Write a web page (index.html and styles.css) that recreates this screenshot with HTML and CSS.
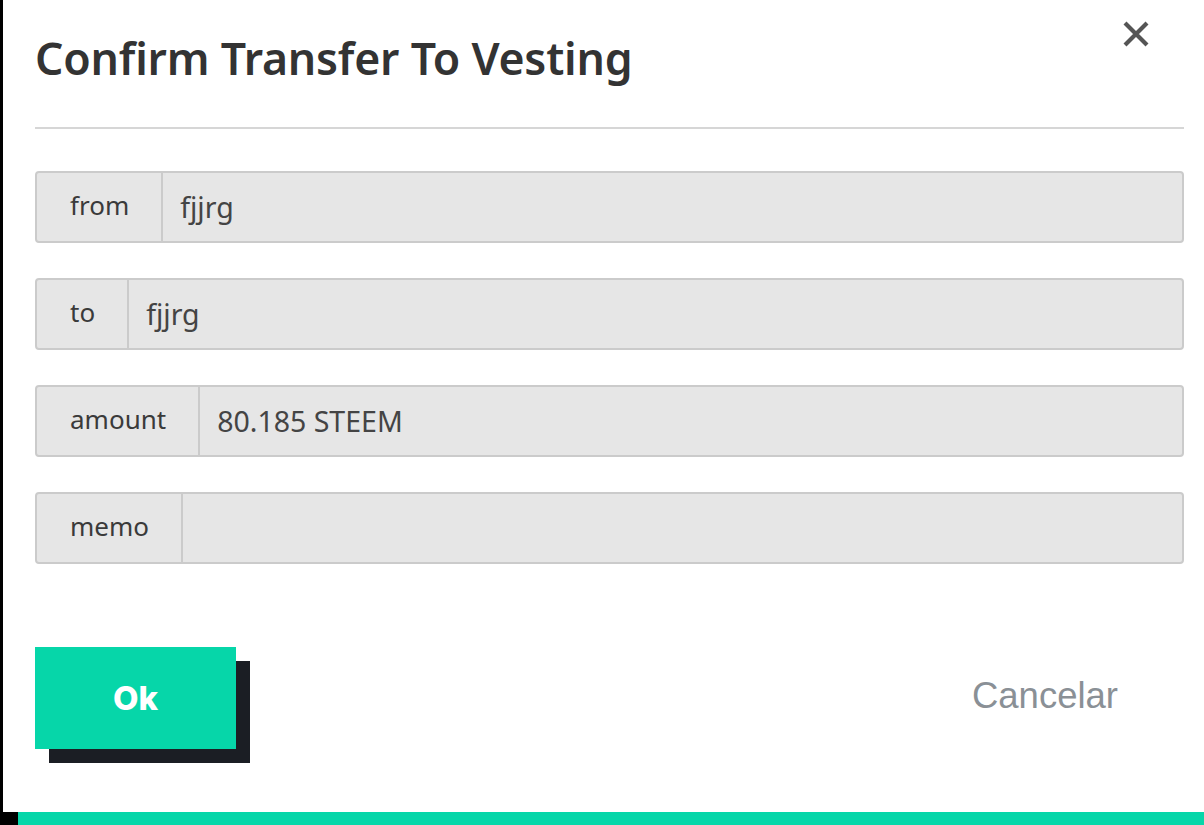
FILE: index.html
```html
<!DOCTYPE html>
<html lang="en">
<head>
<meta charset="utf-8">
<title>Confirm Transfer To Vesting</title>
<link rel="stylesheet" href="styles.css">
</head>
<body>
<div class="screen">
  <div class="modal">
    <button class="close" aria-label="Close">
      <svg width="28" height="28" viewBox="0 0 28 28"><path d="M3 3 L25 25 M25 3 L3 25" stroke="#555" stroke-width="4.2" stroke-linecap="butt"/></svg>
    </button>
    <h1 class="title">Confirm Transfer To Vesting</h1>
    <div class="rule"></div>
    <div class="fields">
      <div class="group"><span class="label">from</span><span class="value">fjjrg</span></div>
      <div class="group"><span class="label">to</span><span class="value">fjjrg</span></div>
      <div class="group"><span class="label">amount</span><span class="value">80.185 STEEM</span></div>
      <div class="group"><span class="label">memo</span><span class="value"></span></div>
    </div>
    <div class="actions">
      <button class="ok">Ok</button>
      <button class="cancel">Cancelar</button>
    </div>
  </div>
  <div class="strip"><div class="strip-green"></div></div>
</div>
</body>
</html>
```

FILE: styles.css
```css
html, body {
  margin: 0;
  padding: 0;
  background: #000;
}
.screen {
  width: 1204px;
  height: 825px;
  display: flex;
  flex-direction: column;
  background: #000;
  overflow: hidden;
}
.modal {
  position: relative;
  flex: 1;
  margin-left: 3px;
  background: #fff;
  padding: 0 20px 0 32px;
  display: flex;
  flex-direction: column;
}
.close {
  position: absolute;
  top: 20px;
  left: 1119px;
  background: none;
  border: 0;
  padding: 0;
  width: 28px;
  height: 28px;
  cursor: pointer;
}
.close svg { display: block; }
.title {
  margin: 30px 0 0 0;
  font-family: "Noto Sans", "Open Sans", sans-serif;
  font-weight: 600;
  font-size: 44.6px;
  line-height: 56px;
  color: #333;
  letter-spacing: -0.2px;
}
.rule {
  margin-top: 41px;
  height: 2px;
  background: #d6d6d6;
}
.fields {
  margin-top: 42px;
  display: flex;
  flex-direction: column;
  gap: 35px;
}
.group {
  display: flex;
  height: 72px;
  border: 2px solid #cbcbcb;
  border-radius: 4px;
  background: #e6e6e6;
  box-sizing: border-box;
  font-family: "Noto Sans", "Open Sans", sans-serif;
}
.label {
  display: flex;
  align-items: center;
  padding: 0 32px 4px 33px;
  font-size: 26px;
  color: #3a3a3a;
  border-right: 2px solid #cbcbcb;
}
.value {
  flex: 1;
  display: flex;
  align-items: center;
  padding: 0 17px 0 17px;
  font-size: 28.5px;
  color: #444;
}
.actions {
  margin-top: 83px;
  display: flex;
  align-items: flex-start;
  justify-content: space-between;
}
.ok {
  width: 201px;
  height: 102px;
  border: 0;
  background: #06d6a9;
  color: #fff;
  font-family: Inter, "Liberation Sans", sans-serif;
  font-weight: 800;
  font-size: 33px;
  box-shadow: 14px 14px 0 #1b1e24;
  cursor: pointer;
}
.cancel {
  margin-top: 28px;
  margin-right: 66px;
  background: none;
  border: 0;
  padding: 0;
  font-family: "Liberation Sans", Arial, sans-serif;
  font-size: 36.5px;
  color: #8a9096;
  cursor: pointer;
}
.strip {
  height: 13px;
  padding-left: 18px;
  background: #000;
  display: flex;
}
.strip-green {
  flex: 1;
  background: #06d6a9;
}
```
